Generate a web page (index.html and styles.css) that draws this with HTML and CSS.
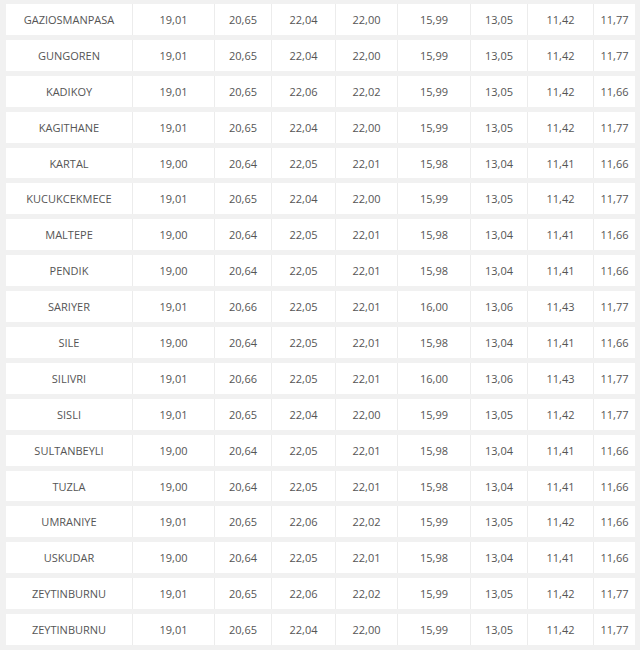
FILE: index.html
```html
<!DOCTYPE html>
<html>
<head>
<meta charset="utf-8">
<link rel="stylesheet" href="styles.css">
</head>
<body>
<table class="prices">
<colgroup>
<col class="c-name"><col class="c1"><col class="c2"><col class="c3"><col class="c4"><col class="c5"><col class="c6"><col class="c7"><col class="c8">
</colgroup>
<tbody>
<tr><td>GAZIOSMANPASA</td><td>19,01</td><td>20,65</td><td>22,04</td><td>22,00</td><td>15,99</td><td>13,05</td><td>11,42</td><td>11,77</td></tr>
<tr><td>GUNGOREN</td><td>19,01</td><td>20,65</td><td>22,04</td><td>22,00</td><td>15,99</td><td>13,05</td><td>11,42</td><td>11,77</td></tr>
<tr><td>KADIKOY</td><td>19,01</td><td>20,65</td><td>22,06</td><td>22,02</td><td>15,99</td><td>13,05</td><td>11,42</td><td>11,66</td></tr>
<tr><td>KAGITHANE</td><td>19,01</td><td>20,65</td><td>22,04</td><td>22,00</td><td>15,99</td><td>13,05</td><td>11,42</td><td>11,77</td></tr>
<tr><td>KARTAL</td><td>19,00</td><td>20,64</td><td>22,05</td><td>22,01</td><td>15,98</td><td>13,04</td><td>11,41</td><td>11,66</td></tr>
<tr><td>KUCUKCEKMECE</td><td>19,01</td><td>20,65</td><td>22,04</td><td>22,00</td><td>15,99</td><td>13,05</td><td>11,42</td><td>11,77</td></tr>
<tr><td>MALTEPE</td><td>19,00</td><td>20,64</td><td>22,05</td><td>22,01</td><td>15,98</td><td>13,04</td><td>11,41</td><td>11,66</td></tr>
<tr><td>PENDIK</td><td>19,00</td><td>20,64</td><td>22,05</td><td>22,01</td><td>15,98</td><td>13,04</td><td>11,41</td><td>11,66</td></tr>
<tr><td>SARIYER</td><td>19,01</td><td>20,66</td><td>22,05</td><td>22,01</td><td>16,00</td><td>13,06</td><td>11,43</td><td>11,77</td></tr>
<tr><td>SILE</td><td>19,00</td><td>20,64</td><td>22,05</td><td>22,01</td><td>15,98</td><td>13,04</td><td>11,41</td><td>11,66</td></tr>
<tr><td>SILIVRI</td><td>19,01</td><td>20,66</td><td>22,05</td><td>22,01</td><td>16,00</td><td>13,06</td><td>11,43</td><td>11,77</td></tr>
<tr><td>SISLI</td><td>19,01</td><td>20,65</td><td>22,04</td><td>22,00</td><td>15,99</td><td>13,05</td><td>11,42</td><td>11,77</td></tr>
<tr><td>SULTANBEYLI</td><td>19,00</td><td>20,64</td><td>22,05</td><td>22,01</td><td>15,98</td><td>13,04</td><td>11,41</td><td>11,66</td></tr>
<tr><td>TUZLA</td><td>19,00</td><td>20,64</td><td>22,05</td><td>22,01</td><td>15,98</td><td>13,04</td><td>11,41</td><td>11,66</td></tr>
<tr><td>UMRANIYE</td><td>19,01</td><td>20,65</td><td>22,06</td><td>22,02</td><td>15,99</td><td>13,05</td><td>11,42</td><td>11,66</td></tr>
<tr><td>USKUDAR</td><td>19,00</td><td>20,64</td><td>22,05</td><td>22,01</td><td>15,98</td><td>13,04</td><td>11,41</td><td>11,66</td></tr>
<tr><td>ZEYTINBURNU</td><td>19,01</td><td>20,65</td><td>22,06</td><td>22,02</td><td>15,99</td><td>13,05</td><td>11,42</td><td>11,77</td></tr>
<tr><td>ZEYTINBURNU</td><td>19,01</td><td>20,65</td><td>22,04</td><td>22,00</td><td>15,99</td><td>13,05</td><td>11,42</td><td>11,77</td></tr>
</tbody>
</table>
</body>
</html>
```
FILE: styles.css
```css
html, body {
  margin: 0;
  padding: 0;
  background: #f1f1f1;
}
body {
  padding: 0 5px 0 6px;
  font-family: "Open Sans", "Liberation Sans", sans-serif;
  font-size: 11px;
  color: #555;
}
.prices {
  width: 629px;
  table-layout: fixed;
  border-collapse: separate;
  border-spacing: 0 5px;
  margin-top: -1px;
}
.c-name { width: 126px; }
.c1 { width: 82px; }
.c2 { width: 57px; }
.c3 { width: 64px; }
.c4 { width: 62px; }
.c5 { width: 73px; }
.c6 { width: 57px; }
.c7 { width: 66px; }
.c8 { width: 42px; }
.prices td {
  background: #fff;
  height: 30.9px;
  padding: 0;
  text-align: center;
  vertical-align: middle;
  border-left: 1px solid #ececec;
  box-sizing: border-box;
  white-space: nowrap;
}
.prices td:first-child {
  border-left: none;
}
```
